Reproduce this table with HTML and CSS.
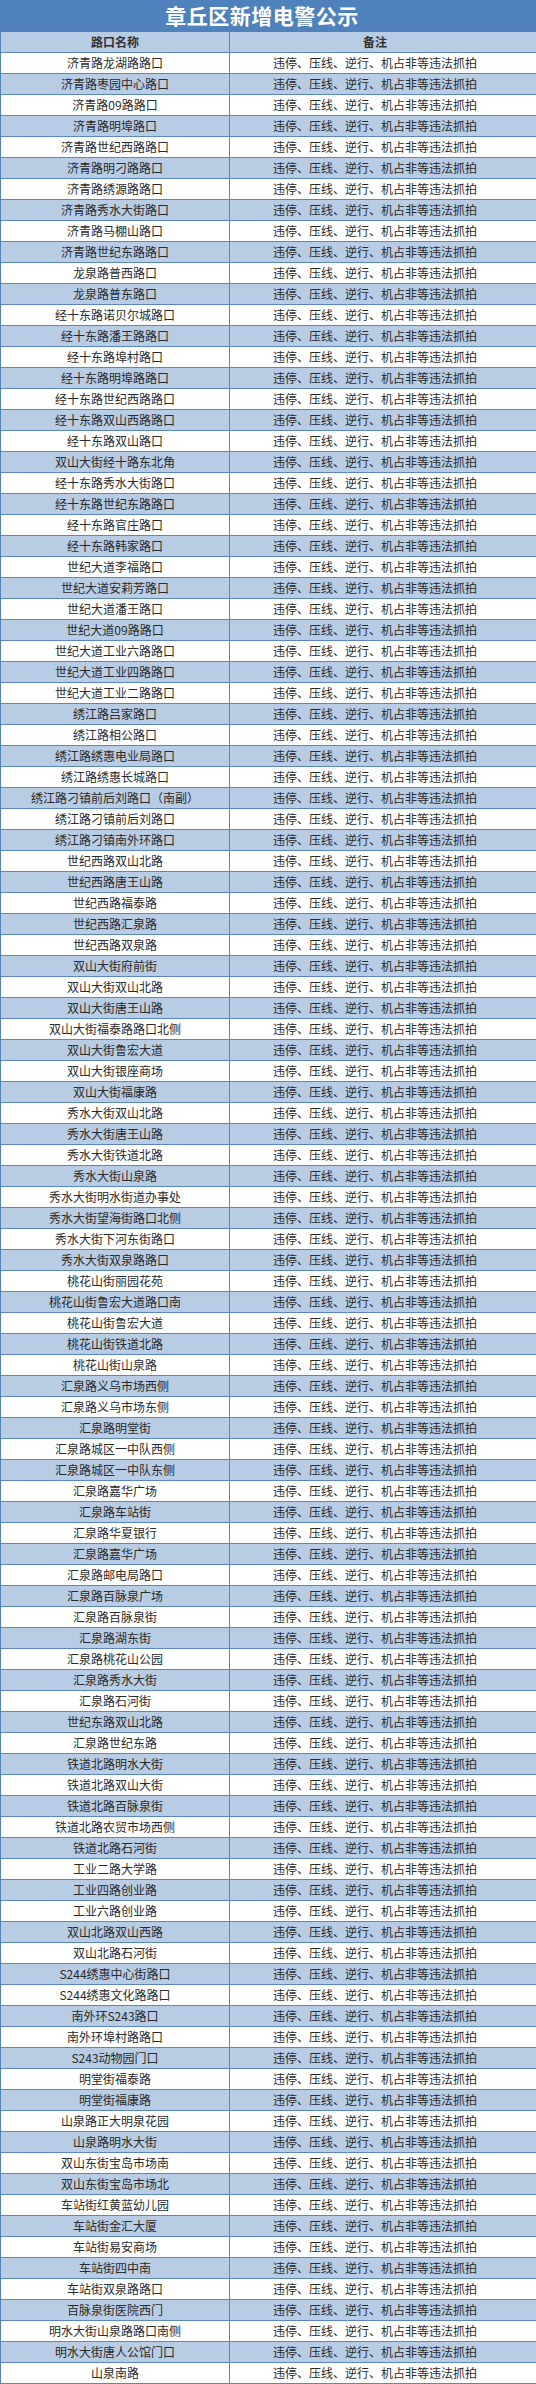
FILE: index.html
```html
<!DOCTYPE html>
<html lang="zh-CN">
<head>
<meta charset="utf-8">
<title>章丘区新增电警公示</title>
<link rel="stylesheet" href="styles.css">
</head>
<body>
<div class="sheet">
  <h1 class="title">章丘区新增电警公示</h1>
  <table class="list">
    <thead>
      <tr><th class="c-name">路口名称</th><th class="c-note">备注</th></tr>
    </thead>
    <tbody>
      <tr><td>济青路龙湖路路口</td><td>违停、压线、逆行、机占非等违法抓拍</td></tr>
      <tr><td>济青路枣园中心路口</td><td>违停、压线、逆行、机占非等违法抓拍</td></tr>
      <tr><td>济青路09路路口</td><td>违停、压线、逆行、机占非等违法抓拍</td></tr>
      <tr><td>济青路明埠路口</td><td>违停、压线、逆行、机占非等违法抓拍</td></tr>
      <tr><td>济青路世纪西路路口</td><td>违停、压线、逆行、机占非等违法抓拍</td></tr>
      <tr><td>济青路明刁路路口</td><td>违停、压线、逆行、机占非等违法抓拍</td></tr>
      <tr><td>济青路绣源路路口</td><td>违停、压线、逆行、机占非等违法抓拍</td></tr>
      <tr><td>济青路秀水大街路口</td><td>违停、压线、逆行、机占非等违法抓拍</td></tr>
      <tr><td>济青路马棚山路口</td><td>违停、压线、逆行、机占非等违法抓拍</td></tr>
      <tr><td>济青路世纪东路路口</td><td>违停、压线、逆行、机占非等违法抓拍</td></tr>
      <tr><td>龙泉路普西路口</td><td>违停、压线、逆行、机占非等违法抓拍</td></tr>
      <tr><td>龙泉路普东路口</td><td>违停、压线、逆行、机占非等违法抓拍</td></tr>
      <tr><td>经十东路诺贝尔城路口</td><td>违停、压线、逆行、机占非等违法抓拍</td></tr>
      <tr><td>经十东路潘王路路口</td><td>违停、压线、逆行、机占非等违法抓拍</td></tr>
      <tr><td>经十东路埠村路口</td><td>违停、压线、逆行、机占非等违法抓拍</td></tr>
      <tr><td>经十东路明埠路路口</td><td>违停、压线、逆行、机占非等违法抓拍</td></tr>
      <tr><td>经十东路世纪西路路口</td><td>违停、压线、逆行、机占非等违法抓拍</td></tr>
      <tr><td>经十东路双山西路路口</td><td>违停、压线、逆行、机占非等违法抓拍</td></tr>
      <tr><td>经十东路双山路口</td><td>违停、压线、逆行、机占非等违法抓拍</td></tr>
      <tr><td>双山大街经十路东北角</td><td>违停、压线、逆行、机占非等违法抓拍</td></tr>
      <tr><td>经十东路秀水大街路口</td><td>违停、压线、逆行、机占非等违法抓拍</td></tr>
      <tr><td>经十东路世纪东路路口</td><td>违停、压线、逆行、机占非等违法抓拍</td></tr>
      <tr><td>经十东路官庄路口</td><td>违停、压线、逆行、机占非等违法抓拍</td></tr>
      <tr><td>经十东路韩家路口</td><td>违停、压线、逆行、机占非等违法抓拍</td></tr>
      <tr><td>世纪大道李福路口</td><td>违停、压线、逆行、机占非等违法抓拍</td></tr>
      <tr><td>世纪大道安莉芳路口</td><td>违停、压线、逆行、机占非等违法抓拍</td></tr>
      <tr><td>世纪大道潘王路口</td><td>违停、压线、逆行、机占非等违法抓拍</td></tr>
      <tr><td>世纪大道09路路口</td><td>违停、压线、逆行、机占非等违法抓拍</td></tr>
      <tr><td>世纪大道工业六路路口</td><td>违停、压线、逆行、机占非等违法抓拍</td></tr>
      <tr><td>世纪大道工业四路路口</td><td>违停、压线、逆行、机占非等违法抓拍</td></tr>
      <tr><td>世纪大道工业二路路口</td><td>违停、压线、逆行、机占非等违法抓拍</td></tr>
      <tr><td>绣江路吕家路口</td><td>违停、压线、逆行、机占非等违法抓拍</td></tr>
      <tr><td>绣江路相公路口</td><td>违停、压线、逆行、机占非等违法抓拍</td></tr>
      <tr><td>绣江路绣惠电业局路口</td><td>违停、压线、逆行、机占非等违法抓拍</td></tr>
      <tr><td>绣江路绣惠长城路口</td><td>违停、压线、逆行、机占非等违法抓拍</td></tr>
      <tr><td>绣江路刁镇前后刘路口（南副）</td><td>违停、压线、逆行、机占非等违法抓拍</td></tr>
      <tr><td>绣江路刁镇前后刘路口</td><td>违停、压线、逆行、机占非等违法抓拍</td></tr>
      <tr><td>绣江路刁镇南外环路口</td><td>违停、压线、逆行、机占非等违法抓拍</td></tr>
      <tr><td>世纪西路双山北路</td><td>违停、压线、逆行、机占非等违法抓拍</td></tr>
      <tr><td>世纪西路唐王山路</td><td>违停、压线、逆行、机占非等违法抓拍</td></tr>
      <tr><td>世纪西路福泰路</td><td>违停、压线、逆行、机占非等违法抓拍</td></tr>
      <tr><td>世纪西路汇泉路</td><td>违停、压线、逆行、机占非等违法抓拍</td></tr>
      <tr><td>世纪西路双泉路</td><td>违停、压线、逆行、机占非等违法抓拍</td></tr>
      <tr><td>双山大街府前街</td><td>违停、压线、逆行、机占非等违法抓拍</td></tr>
      <tr><td>双山大街双山北路</td><td>违停、压线、逆行、机占非等违法抓拍</td></tr>
      <tr><td>双山大街唐王山路</td><td>违停、压线、逆行、机占非等违法抓拍</td></tr>
      <tr><td>双山大街福泰路路口北侧</td><td>违停、压线、逆行、机占非等违法抓拍</td></tr>
      <tr><td>双山大街鲁宏大道</td><td>违停、压线、逆行、机占非等违法抓拍</td></tr>
      <tr><td>双山大街银座商场</td><td>违停、压线、逆行、机占非等违法抓拍</td></tr>
      <tr><td>双山大街福康路</td><td>违停、压线、逆行、机占非等违法抓拍</td></tr>
      <tr><td>秀水大街双山北路</td><td>违停、压线、逆行、机占非等违法抓拍</td></tr>
      <tr><td>秀水大街唐王山路</td><td>违停、压线、逆行、机占非等违法抓拍</td></tr>
      <tr><td>秀水大街铁道北路</td><td>违停、压线、逆行、机占非等违法抓拍</td></tr>
      <tr><td>秀水大街山泉路</td><td>违停、压线、逆行、机占非等违法抓拍</td></tr>
      <tr><td>秀水大街明水街道办事处</td><td>违停、压线、逆行、机占非等违法抓拍</td></tr>
      <tr><td>秀水大街望海街路口北侧</td><td>违停、压线、逆行、机占非等违法抓拍</td></tr>
      <tr><td>秀水大街下河东街路口</td><td>违停、压线、逆行、机占非等违法抓拍</td></tr>
      <tr><td>秀水大街双泉路路口</td><td>违停、压线、逆行、机占非等违法抓拍</td></tr>
      <tr><td>桃花山街丽园花苑</td><td>违停、压线、逆行、机占非等违法抓拍</td></tr>
      <tr><td>桃花山街鲁宏大道路口南</td><td>违停、压线、逆行、机占非等违法抓拍</td></tr>
      <tr><td>桃花山街鲁宏大道</td><td>违停、压线、逆行、机占非等违法抓拍</td></tr>
      <tr><td>桃花山街铁道北路</td><td>违停、压线、逆行、机占非等违法抓拍</td></tr>
      <tr><td>桃花山街山泉路</td><td>违停、压线、逆行、机占非等违法抓拍</td></tr>
      <tr><td>汇泉路义乌市场西侧</td><td>违停、压线、逆行、机占非等违法抓拍</td></tr>
      <tr><td>汇泉路义乌市场东侧</td><td>违停、压线、逆行、机占非等违法抓拍</td></tr>
      <tr><td>汇泉路明堂街</td><td>违停、压线、逆行、机占非等违法抓拍</td></tr>
      <tr><td>汇泉路城区一中队西侧</td><td>违停、压线、逆行、机占非等违法抓拍</td></tr>
      <tr><td>汇泉路城区一中队东侧</td><td>违停、压线、逆行、机占非等违法抓拍</td></tr>
      <tr><td>汇泉路嘉华广场</td><td>违停、压线、逆行、机占非等违法抓拍</td></tr>
      <tr><td>汇泉路车站街</td><td>违停、压线、逆行、机占非等违法抓拍</td></tr>
      <tr><td>汇泉路华夏银行</td><td>违停、压线、逆行、机占非等违法抓拍</td></tr>
      <tr><td>汇泉路嘉华广场</td><td>违停、压线、逆行、机占非等违法抓拍</td></tr>
      <tr><td>汇泉路邮电局路口</td><td>违停、压线、逆行、机占非等违法抓拍</td></tr>
      <tr><td>汇泉路百脉泉广场</td><td>违停、压线、逆行、机占非等违法抓拍</td></tr>
      <tr><td>汇泉路百脉泉街</td><td>违停、压线、逆行、机占非等违法抓拍</td></tr>
      <tr><td>汇泉路湖东街</td><td>违停、压线、逆行、机占非等违法抓拍</td></tr>
      <tr><td>汇泉路桃花山公园</td><td>违停、压线、逆行、机占非等违法抓拍</td></tr>
      <tr><td>汇泉路秀水大街</td><td>违停、压线、逆行、机占非等违法抓拍</td></tr>
      <tr><td>汇泉路石河街</td><td>违停、压线、逆行、机占非等违法抓拍</td></tr>
      <tr><td>世纪东路双山北路</td><td>违停、压线、逆行、机占非等违法抓拍</td></tr>
      <tr><td>汇泉路世纪东路</td><td>违停、压线、逆行、机占非等违法抓拍</td></tr>
      <tr><td>铁道北路明水大街</td><td>违停、压线、逆行、机占非等违法抓拍</td></tr>
      <tr><td>铁道北路双山大街</td><td>违停、压线、逆行、机占非等违法抓拍</td></tr>
      <tr><td>铁道北路百脉泉街</td><td>违停、压线、逆行、机占非等违法抓拍</td></tr>
      <tr><td>铁道北路农贸市场西侧</td><td>违停、压线、逆行、机占非等违法抓拍</td></tr>
      <tr><td>铁道北路石河街</td><td>违停、压线、逆行、机占非等违法抓拍</td></tr>
      <tr><td>工业二路大学路</td><td>违停、压线、逆行、机占非等违法抓拍</td></tr>
      <tr><td>工业四路创业路</td><td>违停、压线、逆行、机占非等违法抓拍</td></tr>
      <tr><td>工业六路创业路</td><td>违停、压线、逆行、机占非等违法抓拍</td></tr>
      <tr><td>双山北路双山西路</td><td>违停、压线、逆行、机占非等违法抓拍</td></tr>
      <tr><td>双山北路石河街</td><td>违停、压线、逆行、机占非等违法抓拍</td></tr>
      <tr><td>S244绣惠中心街路口</td><td>违停、压线、逆行、机占非等违法抓拍</td></tr>
      <tr><td>S244绣惠文化路路口</td><td>违停、压线、逆行、机占非等违法抓拍</td></tr>
      <tr><td>南外环S243路口</td><td>违停、压线、逆行、机占非等违法抓拍</td></tr>
      <tr><td>南外环埠村路路口</td><td>违停、压线、逆行、机占非等违法抓拍</td></tr>
      <tr><td>S243动物园门口</td><td>违停、压线、逆行、机占非等违法抓拍</td></tr>
      <tr><td>明堂街福泰路</td><td>违停、压线、逆行、机占非等违法抓拍</td></tr>
      <tr><td>明堂街福康路</td><td>违停、压线、逆行、机占非等违法抓拍</td></tr>
      <tr><td>山泉路正大明泉花园</td><td>违停、压线、逆行、机占非等违法抓拍</td></tr>
      <tr><td>山泉路明水大街</td><td>违停、压线、逆行、机占非等违法抓拍</td></tr>
      <tr><td>双山东街宝岛市场南</td><td>违停、压线、逆行、机占非等违法抓拍</td></tr>
      <tr><td>双山东街宝岛市场北</td><td>违停、压线、逆行、机占非等违法抓拍</td></tr>
      <tr><td>车站街红黄蓝幼儿园</td><td>违停、压线、逆行、机占非等违法抓拍</td></tr>
      <tr><td>车站街金汇大厦</td><td>违停、压线、逆行、机占非等违法抓拍</td></tr>
      <tr><td>车站街易安商场</td><td>违停、压线、逆行、机占非等违法抓拍</td></tr>
      <tr><td>车站街四中南</td><td>违停、压线、逆行、机占非等违法抓拍</td></tr>
      <tr><td>车站街双泉路路口</td><td>违停、压线、逆行、机占非等违法抓拍</td></tr>
      <tr><td>百脉泉街医院西门</td><td>违停、压线、逆行、机占非等违法抓拍</td></tr>
      <tr><td>明水大街山泉路路口南侧</td><td>违停、压线、逆行、机占非等违法抓拍</td></tr>
      <tr><td>明水大街唐人公馆门口</td><td>违停、压线、逆行、机占非等违法抓拍</td></tr>
      <tr><td>山泉南路</td><td>违停、压线、逆行、机占非等违法抓拍</td></tr>
    </tbody>
  </table>
</div>
</body>
</html>
```
FILE: styles.css
```css
html, body {
  margin: 0;
  padding: 0;
  background: #ffffff;
}

.sheet {
  width: 536px;
  font-family: "Noto Sans CJK SC", "Noto Sans", sans-serif;
  color: #2a2a2a;
}

.title {
  margin: 0;
  height: 32px;
  background: #4f81bd;
  color: #ffffff;
  font-size: 21px;
  font-weight: 700;
  line-height: 31px;
  text-align: center;
  letter-spacing: 0.5px;
  padding-right: 12px;
  box-sizing: border-box;
}

.list {
  width: 536px;
  border-collapse: collapse;
  table-layout: fixed;
  font-size: 12px;
}

.list th,
.list td {
  height: 20px;
  padding: 0;
  border: 1px solid #5b87c0;
  text-align: center;
  vertical-align: middle;
  line-height: 20px;
  white-space: nowrap;
  overflow: hidden;
}

.list th:first-child,
.list td:first-child {
  border-left: 1px solid #4f81bd;
  width: 228px;
}

.list th:last-child,
.list td:last-child {
  border-right: none;
  padding-right: 16px;
}

.list thead tr {
  background: #b8cce4;
}

.list th {
  font-weight: 700;
  color: #333333;
  border-top: none;
}

.list tbody tr:nth-child(even) {
  background: #b8cce4;
}

.list td {
  font-weight: 400;
}
```
